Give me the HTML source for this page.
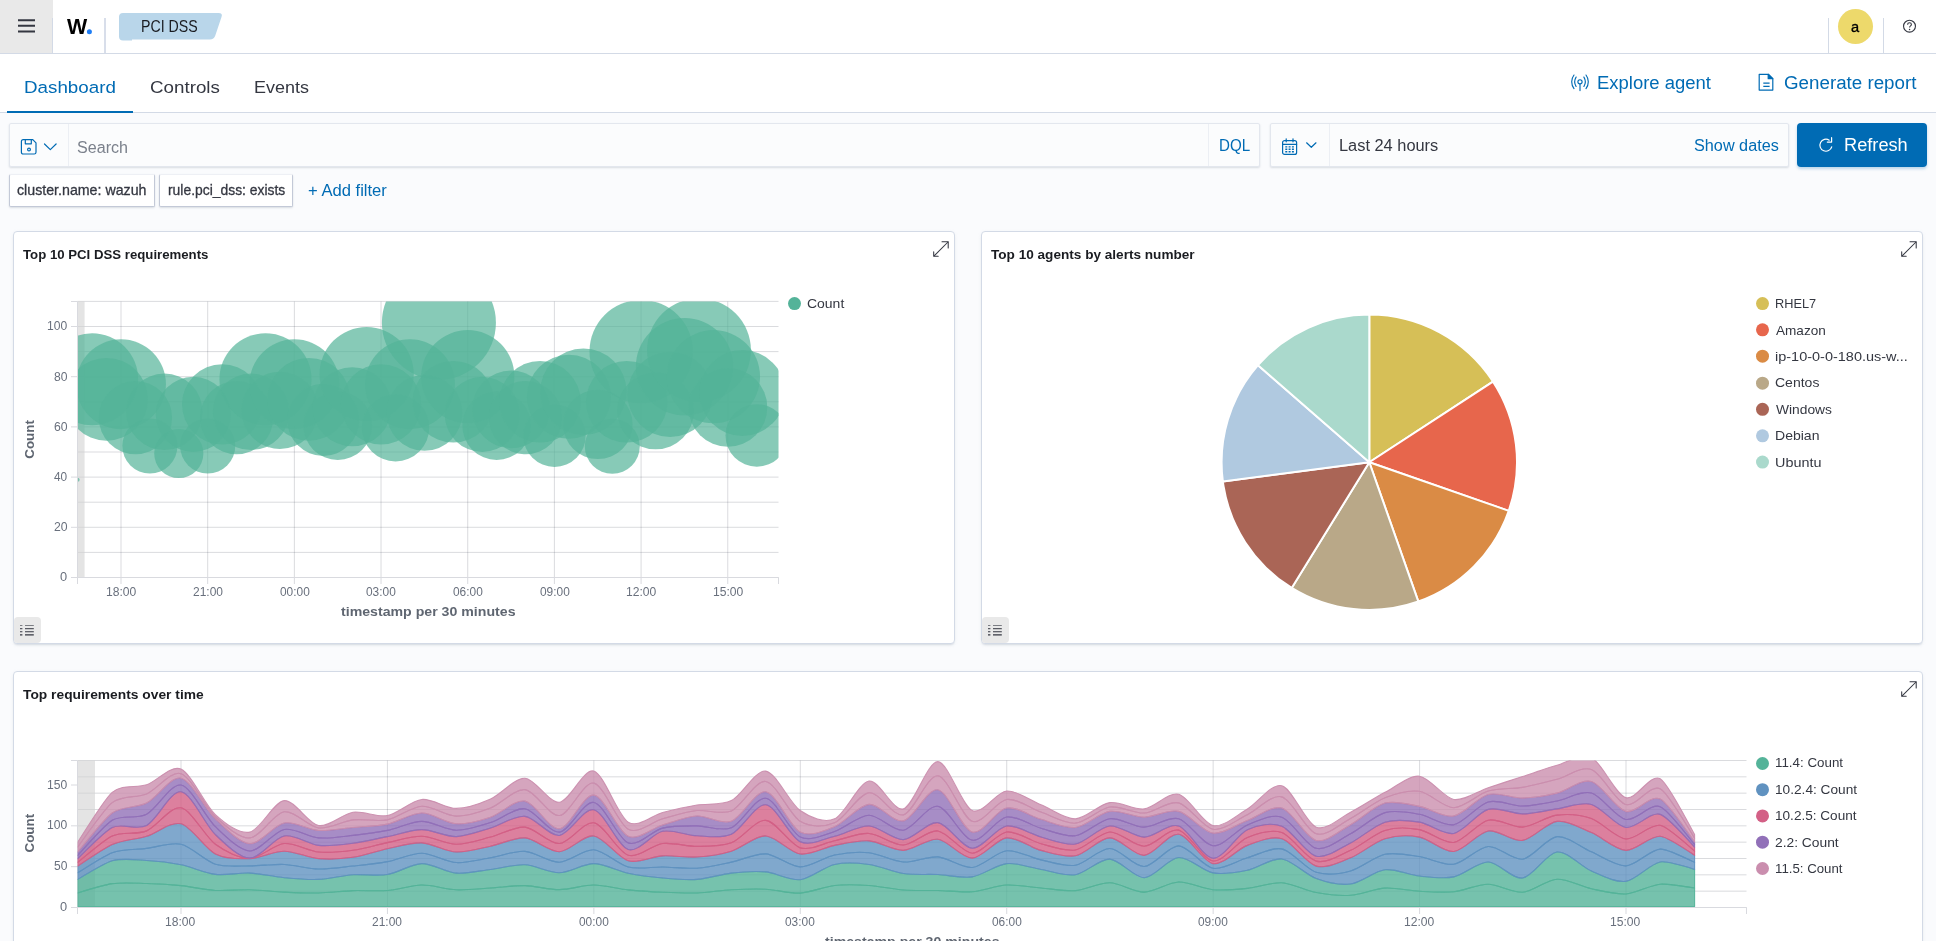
<!DOCTYPE html>
<html lang="en">
<head>
<meta charset="utf-8">
<title>PCI DSS - Wazuh</title>
<style>
*{box-sizing:border-box;margin:0;padding:0}
html,body{width:1936px;height:941px;overflow:hidden}
body{position:relative;background:#fafbfd;font-family:"Liberation Sans",sans-serif;color:#343741}
#app{position:absolute;left:0;top:0;width:1936px;height:941px;overflow:hidden;will-change:transform}
header,nav,main,section,form,ul,li,.grp{position:static;display:block;list-style:none}
.t{position:absolute;white-space:nowrap;line-height:1;display:block;font-style:normal;border:0;background:none;text-decoration:none}
.abs,svg{position:absolute;display:block}
.hdr-bg{position:absolute;left:0;top:0;width:1936px;height:54px;background:#fff;border-bottom:1px solid #d3dae6}
.menu{position:absolute;left:0;top:0;width:53px;height:53px;background:#e9e9e9;border:0}
.vsep{position:absolute;top:18px;width:1px;height:35px;background:#d3dae6}
.avatar{position:absolute;left:1838px;top:9px;width:35px;height:35px;border-radius:50%;background:#edd96b}
.nav-bg{position:absolute;left:0;top:54px;width:1936px;height:59px;background:#fff;border-bottom:1px solid #d3dae6}
.tabsel{position:absolute;left:7px;top:111px;width:126px;height:2px;background:#006bb4}
.field{position:absolute;background:#fbfcfd;border:1px solid #e3e7ee;border-radius:2px;box-shadow:0 1px 2px rgba(152,162,179,.35)}
.fsep{position:absolute;top:0;width:1px;height:100%;background:#eceff4}
.btn{position:absolute;left:1797px;top:123px;width:130px;height:44px;background:#006bb4;border:0;border-radius:4px;box-shadow:0 2px 3px rgba(0,107,180,.25)}
.pill{position:absolute;top:174px;height:33px;background:#fff;border:1px solid #c3c9d7;border-top-color:#eef0f5;border-radius:2px;box-shadow:0 1px 2px rgba(152,162,179,.35)}
.panel{position:absolute;background:#fff;border:1px solid #d3dae6;border-radius:4px;box-shadow:0 2px 2px -1px rgba(152,162,179,.3),0 1px 5px -2px rgba(152,162,179,.3)}
.lgbtn{position:absolute;width:27px;height:26px;background:#e9e9e9;border:0;border-radius:4px 4px 4px 3px}
.menu svg,.lgbtn svg{left:0;top:0}
</style>
</head>
<body>
<div id="app">
<header>
<div class="hdr-bg"></div>
<button class="menu" aria-label="Toggle primary navigation"><svg width="52" height="53" viewBox="0 0 52 53"><path d="M18 20.2h17M18 25.8h17M18 31.4h17" stroke="#343741" stroke-width="2" fill="none"/></svg></button>
<div class="vsep" style="left:52px"></div>
<div class="grp logo">
<span class="t" style='left:66.60px;top:17.00px;font-size:21.5px;color:#000;font-weight:700;font-family:"Liberation Sans", sans-serif;transform:scaleX(0.9951);transform-origin:0 50%;'>W</span>
<svg style="left:86px;top:28px" width="8" height="8" viewBox="0 0 8 8"><circle cx="3.4" cy="3.85" r="2.5" fill="#1f7ef5"/></svg>
</div>
<div class="vsep" style="left:104px;width:2px;background:#d8deea"></div>
<nav class="breadcrumbs" aria-label="breadcrumb">
<svg style="left:118px;top:12px" width="106" height="29" viewBox="118 12 106 29"><path d="M123 13h95.5q4.5 0 3 4l-6.2 18.6q-1.3 4 -5.5 4H132v1h-9q-4 0 -4 -4V17q0 -4 4 -4z" fill="#b9d6ea"/></svg>
<span class="t" style='left:140.76px;top:18.00px;font-size:16.2px;color:#1a1c21;font-weight:400;font-family:"Liberation Sans", sans-serif;transform:scaleX(0.8756);transform-origin:0 50%;'>PCI DSS</span>
</nav>
<div class="vsep" style="left:1828px"></div>
<div class="avatar"></div>
<span class="t" style='left:1851.23px;top:19.00px;font-size:15.4px;color:#000;font-weight:400;font-family:"Liberation Sans", sans-serif;-webkit-text-stroke:0.35px #000;transform:scaleX(0.9500);transform-origin:0 50%;'>a</span>
<div class="vsep" style="left:1883px"></div>
<svg style="left:1901px;top:18px" width="17" height="17" viewBox="0 0 17 17"><circle cx="8.5" cy="8.2" r="5.95" fill="none" stroke="#343741" stroke-width="1.1"/><path d="M6.6 6.7c0-1.1.8-1.9 1.9-1.9s1.9.7 1.9 1.7c0 1.3-1.8 1.4-1.8 2.9" fill="none" stroke="#343741" stroke-width="1.1"/><circle cx="8.55" cy="11.4" r=".75" fill="#343741"/></svg>
</header>
<nav class="tabs">
<div class="nav-bg"></div>
<div class="tabsel"></div>
<a class="t" style='left:23.79px;top:79.00px;font-size:17.4px;color:#006bb4;font-weight:400;font-family:"Liberation Sans", sans-serif;transform:scaleX(1.0793);transform-origin:0 50%;'>Dashboard</a>
<a class="t" style='left:149.84px;top:79.00px;font-size:17.4px;color:#343741;font-weight:400;font-family:"Liberation Sans", sans-serif;transform:scaleX(1.0790);transform-origin:0 50%;'>Controls</a>
<a class="t" style='left:254.45px;top:79.00px;font-size:17.4px;color:#343741;font-weight:400;font-family:"Liberation Sans", sans-serif;transform:scaleX(1.0333);transform-origin:0 50%;'>Events</a>
<svg style="left:1569.7px;top:72px" width="20" height="20" viewBox="0 0 20 20" fill="none" stroke="#006bb4" stroke-width="1.15" stroke-linecap="round"><circle cx="10" cy="9.8" r="2.1"/><path d="M10 12V18.6"/><path d="M6.1 5.1A9.1 9.1 0 0 0 6.1 14.5M13.9 5.1A9.1 9.1 0 0 1 13.9 14.5M4 3A11.2 11.2 0 0 0 4 16.6M16 3A11.2 11.2 0 0 1 16 16.6"/></svg>
<button class="t" style='left:1597.16px;top:74.00px;font-size:18px;color:#006bb4;font-weight:400;font-family:"Liberation Sans", sans-serif;transform:scaleX(1.0258);transform-origin:0 50%;'>Explore agent</button>
<svg style="left:1757px;top:72px" width="20" height="22" viewBox="0 0 20 22" fill="none" stroke="#006bb4" stroke-width="1.2" stroke-linejoin="round"><path d="M2.2 2.3h9l4.6 4.4v11.4H2.2z"/><path d="M11.2 2.3v4.4h4.6z" fill="#006bb4"/><path d="M6.3 11.2h6.3M6.3 14.3h6.3"/></svg>
<button class="t" style='left:1783.66px;top:74.00px;font-size:18px;color:#006bb4;font-weight:400;font-family:"Liberation Sans", sans-serif;transform:scaleX(1.0423);transform-origin:0 50%;'>Generate report</button>
</nav>
<form class="query">
<div class="field" style="left:9px;top:123px;width:1251px;height:44px"><div class="fsep" style="left:58px"></div><div class="fsep" style="left:1198px"></div></div>
<svg style="left:20px;top:138px" width="40" height="18" viewBox="0 0 40 18" fill="none" stroke="#006bb4" stroke-width="1.2" stroke-linejoin="round" stroke-linecap="round"><path d="M3.2 1.6h9.6l3.2 3.2v9.4q0 1.8 -1.8 1.8H3.2q-1.8 0 -1.8 -1.8V3.4q0 -1.8 1.8 -1.8z"/><path d="M5.3 1.8v4h6v-4"/><circle cx="9" cy="11.6" r="1.4"/><path d="M24.5 6l5.8 5.6 5.8 -5.6"/></svg>
<span class="t" style='left:76.89px;top:140.00px;font-size:15.8px;color:#7b818c;font-weight:400;font-family:"Liberation Sans", sans-serif;transform:scaleX(1.0191);transform-origin:0 50%;'>Search</span>
<button class="t" style='left:1219.45px;top:138.00px;font-size:15.8px;color:#006bb4;font-weight:400;font-family:"Liberation Sans", sans-serif;transform:scaleX(0.9578);transform-origin:0 50%;'>DQL</button>
<div class="field" style="left:1270px;top:123px;width:519px;height:44px"><div class="fsep" style="left:58px"></div></div>
<svg style="left:1281px;top:136.6px" width="40" height="20" viewBox="0 0 40 20" fill="none" stroke="#006bb4" stroke-width="1.2" stroke-linejoin="round" stroke-linecap="round"><rect x="1.6" y="3.6" width="14" height="13.8" rx="2"/><path d="M1.6 7.4h14M5.2 1.8v3M12 1.8v3"/><path d="M4.3 9.9h8.6M4.3 12.3h8.6M4.3 14.7h8.6" stroke-width="1.4" stroke-dasharray="2 1.3" stroke-linecap="butt"/><path d="M25.6 5.8l4.7 4.5 4.7 -4.5"/></svg>
<span class="t" style='left:1338.56px;top:138.00px;font-size:15.8px;color:#343741;font-weight:400;font-family:"Liberation Sans", sans-serif;transform:scaleX(1.0368);transform-origin:0 50%;'>Last 24 hours</span>
<button class="t" style='left:1694.08px;top:138.00px;font-size:15.8px;color:#006bb4;font-weight:400;font-family:"Liberation Sans", sans-serif;transform:scaleX(1.0275);transform-origin:0 50%;'>Show dates</button>
<button class="btn" aria-label="Refresh"></button>
<svg style="left:1817px;top:136px" width="18" height="18" viewBox="0 0 18 18" fill="none" stroke="#fff" stroke-width="1.2" stroke-linecap="round" stroke-linejoin="round"><path d="M14.7 10.8A6 6 0 1 1 12.2 4.2"/><path d="M14.6 1.7v4.4h-4.3"/></svg>
<span class="t" style='left:1843.98px;top:136.00px;font-size:18px;color:#fff;font-weight:400;font-family:"Liberation Sans", sans-serif;transform:scaleX(1.0113);transform-origin:0 50%;'>Refresh</span>
</form>
<ul class="filters">
<li><div class="pill" style="left:9px;width:146px"></div>
<span class="t" style='left:17.32px;top:183.00px;font-size:14.8px;color:#343741;font-weight:400;font-family:"Liberation Sans", sans-serif;-webkit-text-stroke:0.3px #343741;transform:scaleX(0.9597);transform-origin:0 50%;'>cluster.name: wazuh</span>
</li><li><div class="pill" style="left:159px;width:134px"></div>
<span class="t" style='left:167.76px;top:183.00px;font-size:14.8px;color:#343741;font-weight:400;font-family:"Liberation Sans", sans-serif;-webkit-text-stroke:0.3px #343741;transform:scaleX(0.9383);transform-origin:0 50%;'>rule.pci_dss: exists</span>
</li><li>
<button class="t" style='left:308.46px;top:183.00px;font-size:15.8px;color:#006bb4;font-weight:400;font-family:"Liberation Sans", sans-serif;transform:scaleX(1.0506);transform-origin:0 50%;'>+ Add filter</button>
</li></ul>
<main>
<section class="p1">
<div class="panel" style="left:13px;top:231px;width:942px;height:413px"></div>
<h2 class="t" style='left:23.30px;top:248.00px;font-size:13.7px;color:#1a1c21;font-weight:700;font-family:"Liberation Sans", sans-serif;transform:scaleX(0.9649);transform-origin:0 50%;'>Top 10 PCI DSS requirements</h2>
<svg style="left:932px;top:240px" width="18" height="18" viewBox="0 0 18 18" fill="none" stroke="#343741" stroke-width="1.05" stroke-linecap="round" stroke-linejoin="round"><path d="M2.4 15.6L16 2"/><path d="M10 1.7H16.2V7.9"/><path d="M1.7 11.7V16.3H6.2"/></svg>
<svg style="left:14px;top:232px" width="940" height="411" viewBox="14 232 940 411"><defs><clipPath id="c1"><rect x="77.5" y="301.5" width="701" height="276"/></clipPath></defs><g stroke="#1a2030" stroke-opacity=".16" stroke-width="1" fill="none"><path d="M77.5 577.5H778.5M77.5 552.4H778.5M77.5 527.3H778.5M77.5 502.2H778.5M77.5 477.1H778.5M77.5 452H778.5M77.5 426.9H778.5M77.5 401.8H778.5M77.5 376.7H778.5M77.5 351.6H778.5M77.5 326.5H778.5M77.5 301.4H778.5"/><path d="M121 301.5V577.5M207.68 301.5V577.5M294.36 301.5V577.5M381.04 301.5V577.5M467.72 301.5V577.5M554.4 301.5V577.5M641.08 301.5V577.5M727.76 301.5V577.5"/></g><rect x="77.5" y="301.5" width="7.1" height="276.0" fill="#d2d2d2" fill-opacity=".6"/><g clip-path="url(#c1)" fill="#54b399" fill-opacity=".7"><circle cx="77.65" cy="479.86" r="2"/><circle cx="92.1" cy="379.21" r="46.04"/><circle cx="106.55" cy="399.29" r="41.41"/><circle cx="121" cy="384.23" r="44.93"/><circle cx="135.45" cy="417.61" r="36.65"/><circle cx="149.9" cy="445.98" r="27.58"/><circle cx="164.35" cy="411.84" r="38.22"/><circle cx="178.8" cy="453.51" r="24.57"/><circle cx="193.25" cy="414.35" r="37.54"/><circle cx="207.7" cy="445.98" r="27.58"/><circle cx="222.15" cy="404.31" r="40.16"/><circle cx="236.6" cy="417.61" r="36.65"/><circle cx="251.05" cy="411.84" r="38.22"/><circle cx="265.5" cy="379.21" r="46.04"/><circle cx="279.95" cy="410.33" r="38.61"/><circle cx="294.4" cy="384.23" r="44.93"/><circle cx="308.85" cy="399.29" r="41.41"/><circle cx="323.3" cy="419.87" r="36.01"/><circle cx="337.75" cy="425.64" r="34.34"/><circle cx="352.2" cy="406.82" r="39.53"/><circle cx="366.65" cy="374.19" r="47.13"/><circle cx="381.1" cy="404.31" r="40.16"/><circle cx="395.55" cy="427.65" r="33.74"/><circle cx="410" cy="384.23" r="44.93"/><circle cx="424.45" cy="412.84" r="37.95"/><circle cx="438.9" cy="322.74" r="57.02"/><circle cx="453.35" cy="401.8" r="40.79"/><circle cx="467.8" cy="376.7" r="46.59"/><circle cx="482.25" cy="414.35" r="37.54"/><circle cx="496.7" cy="425.64" r="34.34"/><circle cx="511.15" cy="409.33" r="38.88"/><circle cx="525.6" cy="417.61" r="36.65"/><circle cx="540.05" cy="401.8" r="40.79"/><circle cx="554.5" cy="435.69" r="31.2"/><circle cx="568.95" cy="396.78" r="42.02"/><circle cx="583.4" cy="391.76" r="43.21"/><circle cx="597.85" cy="424.39" r="34.71"/><circle cx="612.3" cy="446.23" r="27.49"/><circle cx="626.75" cy="401.8" r="40.79"/><circle cx="641.2" cy="351.6" r="51.71"/><circle cx="655.65" cy="410.84" r="38.48"/><circle cx="670.1" cy="394.27" r="42.62"/><circle cx="684.55" cy="366.66" r="48.7"/><circle cx="699" cy="350.35" r="51.95"/><circle cx="713.45" cy="376.7" r="46.59"/><circle cx="727.9" cy="407.32" r="39.4"/><circle cx="742.35" cy="393.01" r="42.91"/><circle cx="756.8" cy="435.43" r="31.28"/></g><path d="M77.5 301.5V577.5M77.5 577.5H778.5M71 577.5H77.5M71 527.3H77.5M71 477.1H77.5M71 426.9H77.5M71 376.7H77.5M71 326.5H77.5M71 301.5H77.5M121 577.5V584M207.68 577.5V584M294.36 577.5V584M381.04 577.5V584M467.72 577.5V584M554.4 577.5V584M641.08 577.5V584M727.76 577.5V584M77.5 577.5V584M778.5 577.5V584" stroke="#d9dadf" stroke-width="1" fill="none"/><text x="33.8" y="439.4" transform="rotate(-90 33.8 439.4)" text-anchor="middle" font-family="Liberation Sans, sans-serif" font-size="13.6" font-weight="700" fill="#5f6671" textLength="38.6" lengthAdjust="spacingAndGlyphs">Count</text></svg>
<span class="t" style='left:60.07px;top:571.00px;font-size:12px;color:#69707d;font-weight:400;font-family:"Liberation Sans", sans-serif;transform:scaleX(1.0678);transform-origin:0 50%;'>0</span>
<span class="t" style='left:53.59px;top:521.00px;font-size:12px;color:#69707d;font-weight:400;font-family:"Liberation Sans", sans-serif;transform:scaleX(1.0183);transform-origin:0 50%;'>20</span>
<span class="t" style='left:54.00px;top:471.00px;font-size:12px;color:#69707d;font-weight:400;font-family:"Liberation Sans", sans-serif;transform:scaleX(0.9864);transform-origin:0 50%;'>40</span>
<span class="t" style='left:53.59px;top:421.00px;font-size:12px;color:#69707d;font-weight:400;font-family:"Liberation Sans", sans-serif;transform:scaleX(1.0183);transform-origin:0 50%;'>60</span>
<span class="t" style='left:53.69px;top:371.00px;font-size:12px;color:#69707d;font-weight:400;font-family:"Liberation Sans", sans-serif;transform:scaleX(1.0101);transform-origin:0 50%;'>80</span>
<span class="t" style='left:46.99px;top:320.00px;font-size:12px;color:#69707d;font-weight:400;font-family:"Liberation Sans", sans-serif;transform:scaleX(1.0081);transform-origin:0 50%;'>100</span>
<span class="t" style='left:105.89px;top:586.00px;font-size:12px;color:#69707d;font-weight:400;font-family:"Liberation Sans", sans-serif;transform:scaleX(1.0085);transform-origin:0 50%;'>18:00</span>
<span class="t" style='left:192.88px;top:586.00px;font-size:12px;color:#69707d;font-weight:400;font-family:"Liberation Sans", sans-serif;transform:scaleX(0.9981);transform-origin:0 50%;'>21:00</span>
<span class="t" style='left:279.76px;top:586.00px;font-size:12px;color:#69707d;font-weight:400;font-family:"Liberation Sans", sans-serif;transform:scaleX(0.9913);transform-origin:0 50%;'>00:00</span>
<span class="t" style='left:366.44px;top:586.00px;font-size:12px;color:#69707d;font-weight:400;font-family:"Liberation Sans", sans-serif;transform:scaleX(0.9913);transform-origin:0 50%;'>03:00</span>
<span class="t" style='left:453.12px;top:586.00px;font-size:12px;color:#69707d;font-weight:400;font-family:"Liberation Sans", sans-serif;transform:scaleX(0.9913);transform-origin:0 50%;'>06:00</span>
<span class="t" style='left:539.80px;top:586.00px;font-size:12px;color:#69707d;font-weight:400;font-family:"Liberation Sans", sans-serif;transform:scaleX(0.9913);transform-origin:0 50%;'>09:00</span>
<span class="t" style='left:625.97px;top:586.00px;font-size:12px;color:#69707d;font-weight:400;font-family:"Liberation Sans", sans-serif;transform:scaleX(1.0085);transform-origin:0 50%;'>12:00</span>
<span class="t" style='left:712.65px;top:586.00px;font-size:12px;color:#69707d;font-weight:400;font-family:"Liberation Sans", sans-serif;transform:scaleX(1.0085);transform-origin:0 50%;'>15:00</span>
<span class="t" style='left:340.90px;top:605.00px;font-size:13.6px;color:#5f6671;font-weight:700;font-family:"Liberation Sans", sans-serif;transform:scaleX(1.0405);transform-origin:0 50%;'>timestamp per 30 minutes</span>
<button class="lgbtn" style="left:14px;top:617px" aria-label="Toggle legend"><svg width="27" height="27" viewBox="0 0 27 27" fill="none" stroke="#343741" stroke-width="1.15"><path d="M11 8.5H19.8M6 8.5H8.4" stroke-opacity=".6"/><path d="M11 11.6H19.8M6 11.6H8.4" stroke-opacity=".8"/><path d="M11 14.7H19.8M6 14.7H8.4M11 17.8H19.8M6 17.8H8.4"/></svg></button>
<svg style="left:786.5px;top:295px" width="16" height="17" viewBox="786.5 295 16 17"><circle cx="794" cy="303.6" r="6.5" fill="#54b399"/></svg><ul class="legend"><li><span class="t" style='left:807.28px;top:297.00px;font-size:13.5px;color:#343741;font-weight:400;font-family:"Liberation Sans", sans-serif;transform:scaleX(1.0347);transform-origin:0 50%;'>Count</span></li></ul>
</section>
<section class="p2">
<div class="panel" style="left:981px;top:231px;width:942px;height:413px"></div>
<h2 class="t" style='left:991.30px;top:248.00px;font-size:13.7px;color:#1a1c21;font-weight:700;font-family:"Liberation Sans", sans-serif;transform:scaleX(0.9928);transform-origin:0 50%;'>Top 10 agents by alerts number</h2>
<svg style="left:1900px;top:240px" width="18" height="18" viewBox="0 0 18 18" fill="none" stroke="#343741" stroke-width="1.05" stroke-linecap="round" stroke-linejoin="round"><path d="M2.4 15.6L16 2"/><path d="M10 1.7H16.2V7.9"/><path d="M1.7 11.7V16.3H6.2"/></svg>
<svg style="left:982px;top:232px" width="940" height="411" viewBox="982 232 940 411"><path d="M1369.3 462.25L1369.3 314.55A147.7 147.7 0 0 1 1493.03 381.59Z" fill="#d6bf57" stroke="#fff" stroke-width="2" stroke-linejoin="round"/><path d="M1369.3 462.25L1493.03 381.59A147.7 147.7 0 0 1 1508.78 510.82Z" fill="#e7664c" stroke="#fff" stroke-width="2" stroke-linejoin="round"/><path d="M1369.3 462.25L1508.78 510.82A147.7 147.7 0 0 1 1418.36 601.56Z" fill="#da8b45" stroke="#fff" stroke-width="2" stroke-linejoin="round"/><path d="M1369.3 462.25L1418.36 601.56A147.7 147.7 0 0 1 1291.69 587.91Z" fill="#b9a888" stroke="#fff" stroke-width="2" stroke-linejoin="round"/><path d="M1369.3 462.25L1291.69 587.91A147.7 147.7 0 0 1 1222.86 481.53Z" fill="#aa6556" stroke="#fff" stroke-width="2" stroke-linejoin="round"/><path d="M1369.3 462.25L1222.86 481.53A147.7 147.7 0 0 1 1258 365.16Z" fill="#b0c9e0" stroke="#fff" stroke-width="2" stroke-linejoin="round"/><path d="M1369.3 462.25L1258 365.16A147.7 147.7 0 0 1 1369.3 314.55Z" fill="#aad9cc" stroke="#fff" stroke-width="2" stroke-linejoin="round"/></svg>
<button class="lgbtn" style="left:982px;top:617px" aria-label="Toggle legend"><svg width="27" height="27" viewBox="0 0 27 27" fill="none" stroke="#343741" stroke-width="1.15"><path d="M11 8.5H19.8M6 8.5H8.4" stroke-opacity=".6"/><path d="M11 11.6H19.8M6 11.6H8.4" stroke-opacity=".8"/><path d="M11 14.7H19.8M6 14.7H8.4M11 17.8H19.8M6 17.8H8.4"/></svg></button>
<svg style="left:1754.5px;top:295px" width="16" height="176" viewBox="1754.5 295 16 176"><circle cx="1762" cy="303.6" r="6.5" fill="#d6bf57"/><circle cx="1762" cy="329.8" r="6.5" fill="#e7664c"/><circle cx="1762" cy="356.2" r="6.5" fill="#da8b45"/><circle cx="1762" cy="383.2" r="6.5" fill="#b9a888"/><circle cx="1762" cy="409.3" r="6.5" fill="#aa6556"/><circle cx="1762" cy="435.8" r="6.5" fill="#b0c9e0"/><circle cx="1762" cy="462.1" r="6.5" fill="#aad9cc"/></svg><ul class="legend"><li><span class="t" style='left:1774.86px;top:297.00px;font-size:13.5px;color:#343741;font-weight:400;font-family:"Liberation Sans", sans-serif;transform:scaleX(0.9447);transform-origin:0 50%;'>RHEL7</span></li><li><span class="t" style='left:1775.90px;top:324.00px;font-size:13.5px;color:#343741;font-weight:400;font-family:"Liberation Sans", sans-serif;transform:scaleX(1.0058);transform-origin:0 50%;'>Amazon</span></li><li><span class="t" style='left:1774.93px;top:350.00px;font-size:13.5px;color:#343741;font-weight:400;font-family:"Liberation Sans", sans-serif;transform:scaleX(1.0726);transform-origin:0 50%;'>ip-10-0-0-180.us-w...</span></li><li><span class="t" style='left:1775.28px;top:376.00px;font-size:13.5px;color:#343741;font-weight:400;font-family:"Liberation Sans", sans-serif;transform:scaleX(1.0378);transform-origin:0 50%;'>Centos</span></li><li><span class="t" style='left:1775.90px;top:403.00px;font-size:13.5px;color:#343741;font-weight:400;font-family:"Liberation Sans", sans-serif;transform:scaleX(1.0218);transform-origin:0 50%;'>Windows</span></li><li><span class="t" style='left:1774.76px;top:429.00px;font-size:13.5px;color:#343741;font-weight:400;font-family:"Liberation Sans", sans-serif;transform:scaleX(1.0398);transform-origin:0 50%;'>Debian</span></li><li><span class="t" style='left:1774.83px;top:456.00px;font-size:13.5px;color:#343741;font-weight:400;font-family:"Liberation Sans", sans-serif;transform:scaleX(1.0665);transform-origin:0 50%;'>Ubuntu</span></li></ul>
</section>
<section class="p3">
<div class="panel" style="left:13px;top:671px;width:1910px;height:300px"></div>
<h2 class="t" style='left:23.30px;top:688.00px;font-size:13.7px;color:#1a1c21;font-weight:700;font-family:"Liberation Sans", sans-serif;transform:scaleX(1.0079);transform-origin:0 50%;'>Top requirements over time</h2>
<svg style="left:1900px;top:680px" width="18" height="18" viewBox="0 0 18 18" fill="none" stroke="#343741" stroke-width="1.05" stroke-linecap="round" stroke-linejoin="round"><path d="M2.4 15.6L16 2"/><path d="M10 1.7H16.2V7.9"/><path d="M1.7 11.7V16.3H6.2"/></svg>
<svg style="left:14px;top:672px" width="1908" height="269" viewBox="14 672 1908 269"><defs><clipPath id="c3"><rect x="77.5" y="760.5" width="1669.0" height="146.5"/></clipPath></defs><g stroke="#1a2030" stroke-opacity=".16" stroke-width="1" fill="none"><path d="M77.5 907.5H1746.5M77.5 891.17H1746.5M77.5 874.83H1746.5M77.5 858.5H1746.5M77.5 842.17H1746.5M77.5 825.83H1746.5M77.5 809.5H1746.5M77.5 793.17H1746.5M77.5 776.83H1746.5M77.5 760.5H1746.5"/><path d="M181 760.5V907.5M387.43 760.5V907.5M593.86 760.5V907.5M800.29 760.5V907.5M1006.72 760.5V907.5M1213.15 760.5V907.5M1419.58 760.5V907.5M1626.01 760.5V907.5"/></g><rect x="77.5" y="760.5" width="17.5" height="147.0" fill="#d2d2d2" fill-opacity=".6"/><path d="M77.5 760.5V907.5M77.5 907.5H1746.5M71 907.5H77.5M71 866.67H77.5M71 825.83H77.5M71 785H77.5M71 760.5H77.5M181 907.5V914M387.43 907.5V914M593.86 907.5V914M800.29 907.5V914M1006.72 907.5V914M1213.15 907.5V914M1419.58 907.5V914M1626.01 907.5V914M77.5 907.5V914M1746.5 907.5V914" stroke="#d9dadf" stroke-width="1" fill="none"/><g clip-path="url(#c3)" fill-opacity=".8" stroke-opacity=".95" stroke-width="1.1" stroke-linejoin="round"><path d="M77.8,892.94Q105.32,884.6,112.2,883.65C122.52,882.23,136.28,883.19,146.6,883.49S170.68,884.6,181,885.64S205.08,889.83,215.4,890.45S239.48,889.54,249.8,889.79S273.88,891.64,284.2,892.11S308.28,893.16,318.6,892.94S342.68,890.98,353,890.62S377.08,891.37,387.4,890.53S411.48,885.17,421.8,885.06S445.88,889.35,456.2,889.79S480.28,888.59,490.6,887.96S514.68,885.39,525,885.64S549.08,889.71,559.4,889.62S583.48,885.02,593.8,885.06S617.88,888.79,628.2,889.87S652.28,891.82,662.6,892.28S686.68,893.31,697,892.94S721.08,890.35,731.4,889.79S755.48,888.71,765.8,889.21S789.88,893.66,800.2,893.1S824.28,886.62,834.6,885.48S858.68,884.79,869,885.48S893.08,889.28,903.4,890.04S927.48,890.29,937.8,890.53S961.88,892.52,972.2,891.7S996.28,885.62,1006.6,885.06S1030.68,887.13,1041,887.96S1065.08,891.39,1075.4,890.62S1099.48,882.6,1109.8,882.82S1133.88,892.23,1144.2,892.11S1168.28,882.35,1178.6,881.99S1202.68,888.75,1213,889.71S1237.08,889.42,1247.4,888.38S1271.48,882.12,1281.8,882.74S1305.88,890.65,1316.2,892.52S1340.28,895.92,1350.6,895.26S1374.68,888.73,1385,888.13S1409.08,890.75,1419.4,891.28S1443.48,892.75,1453.8,891.7S1477.88,884.15,1488.2,884.23S1512.28,893.02,1522.6,892.28S1546.68,879.78,1557,879.26S1581.08,886.59,1591.4,888.79S1615.48,894.62,1625.8,893.93S1649.88,885.13,1660.2,884.23Q1667.08,883.64,1694.6,887.96L1694.6,906.5Q1667.08,906.5,1660.2,906.5C1649.88,906.5,1636.12,906.5,1625.8,906.5S1601.72,906.5,1591.4,906.5S1567.32,906.5,1557,906.5S1532.92,906.5,1522.6,906.5S1498.52,906.5,1488.2,906.5S1464.12,906.5,1453.8,906.5S1429.72,906.5,1419.4,906.5S1395.32,906.5,1385,906.5S1360.92,906.5,1350.6,906.5S1326.52,906.5,1316.2,906.5S1292.12,906.5,1281.8,906.5S1257.72,906.5,1247.4,906.5S1223.32,906.5,1213,906.5S1188.92,906.5,1178.6,906.5S1154.52,906.5,1144.2,906.5S1120.12,906.5,1109.8,906.5S1085.72,906.5,1075.4,906.5S1051.32,906.5,1041,906.5S1016.92,906.5,1006.6,906.5S982.52,906.5,972.2,906.5S948.12,906.5,937.8,906.5S913.72,906.5,903.4,906.5S879.32,906.5,869,906.5S844.92,906.5,834.6,906.5S810.52,906.5,800.2,906.5S776.12,906.5,765.8,906.5S741.72,906.5,731.4,906.5S707.32,906.5,697,906.5S672.92,906.5,662.6,906.5S638.52,906.5,628.2,906.5S604.12,906.5,593.8,906.5S569.72,906.5,559.4,906.5S535.32,906.5,525,906.5S500.92,906.5,490.6,906.5S466.52,906.5,456.2,906.5S432.12,906.5,421.8,906.5S397.72,906.5,387.4,906.5S363.32,906.5,353,906.5S328.92,906.5,318.6,906.5S294.52,906.5,284.2,906.5S260.12,906.5,249.8,906.5S225.72,906.5,215.4,906.5S191.32,906.5,181,906.5S156.92,906.5,146.6,906.5S122.52,906.5,112.2,906.5Q105.32,906.5,77.8,906.5Z" fill="#54b399" stroke="#54b399"/><path d="M77.8,879.38Q105.32,862.69,112.2,860.8C122.52,857.97,136.28,859.88,146.6,860.47S170.68,862.69,181,864.78S205.08,873.16,215.4,874.4S239.48,872.58,249.8,873.08S273.88,876.77,284.2,877.72S308.28,879.83,318.6,879.38S342.68,875.46,353,874.73S377.08,876.24,387.4,874.57S411.48,863.85,421.8,863.62S445.88,872.21,456.2,873.08S480.28,870.67,490.6,869.43S514.68,864.29,525,864.78S549.08,872.92,559.4,872.74S583.48,863.55,593.8,863.62S617.88,871.08,628.2,873.24S652.28,877.13,662.6,878.05S686.68,880.12,697,879.38S721.08,874.2,731.4,873.08S755.48,870.92,765.8,871.92S789.88,880.83,800.2,879.71S824.28,866.74,834.6,864.45S858.68,863.08,869,864.45S893.08,872.06,903.4,873.57S927.48,874.07,937.8,874.57S961.88,878.53,972.2,876.89S996.28,864.74,1006.6,863.62S1030.68,867.76,1041,869.43S1065.08,876.28,1075.4,874.73S1099.48,858.7,1109.8,859.15S1133.88,877.97,1144.2,877.72S1168.28,858.21,1178.6,857.49S1202.68,871,1213,872.91S1237.08,872.35,1247.4,870.26S1271.48,857.74,1281.8,858.98S1305.88,874.79,1316.2,878.55S1340.28,885.34,1350.6,884.02S1374.68,870.95,1385,869.76S1409.08,874.99,1419.4,876.06S1443.48,879,1453.8,876.89S1477.88,861.79,1488.2,861.97S1512.28,879.54,1522.6,878.05S1546.68,853.06,1557,852.01S1581.08,866.68,1591.4,871.09S1615.48,882.74,1625.8,881.37S1649.88,863.76,1660.2,861.97Q1667.08,860.77,1694.6,869.43L1694.6,887.96Q1667.08,883.64,1660.2,884.23C1649.88,885.13,1636.12,893.25,1625.8,893.93S1601.72,890.99,1591.4,888.79S1567.32,878.74,1557,879.26S1532.92,891.53,1522.6,892.28S1498.52,884.32,1488.2,884.23S1464.12,890.64,1453.8,891.7S1429.72,891.82,1419.4,891.28S1395.32,887.53,1385,888.13S1360.92,894.6,1350.6,895.26S1326.52,894.4,1316.2,892.52S1292.12,883.36,1281.8,882.74S1257.72,887.33,1247.4,888.38S1223.32,890.66,1213,889.71S1188.92,881.63,1178.6,881.99S1154.52,891.99,1144.2,892.11S1120.12,883.05,1109.8,882.82S1085.72,889.85,1075.4,890.62S1051.32,888.8,1041,887.96S1016.92,884.5,1006.6,885.06S982.52,890.87,972.2,891.7S948.12,890.78,937.8,890.53S913.72,890.8,903.4,890.04S879.32,886.16,869,885.48S844.92,884.33,834.6,885.48S810.52,892.55,800.2,893.1S776.12,889.71,765.8,889.21S741.72,889.23,731.4,889.79S707.32,892.57,697,892.94S672.92,892.74,662.6,892.28S638.52,890.95,628.2,889.87S604.12,885.1,593.8,885.06S569.72,889.54,559.4,889.62S535.32,885.89,525,885.64S500.92,887.34,490.6,887.96S466.52,890.22,456.2,889.79S432.12,884.95,421.8,885.06S397.72,889.7,387.4,890.53S363.32,890.26,353,890.62S328.92,892.72,318.6,892.94S294.52,892.58,284.2,892.11S260.12,890.04,249.8,889.79S225.72,891.07,215.4,890.45S191.32,886.69,181,885.64S156.92,883.78,146.6,883.49S122.52,882.23,112.2,883.65Q105.32,884.6,77.8,892.94Z" fill="#54b399" stroke="#54b399"/><path d="M77.8,872.74Q105.32,855.12,112.2,852.68C122.52,849.02,136.28,849.62,146.6,848.37S170.68,841.93,181,844.3S205.08,860.97,215.4,864.2S239.48,865.83,249.8,865.86S273.88,863.98,284.2,864.45S308.28,868.78,318.6,869.01S342.68,867.14,353,866.03S377.08,863.55,387.4,861.63S411.48,853.12,421.8,853.26S445.88,861.86,456.2,862.55S480.28,859.5,490.6,857.82S514.68,850.69,525,851.35S549.08,862.45,559.4,862.21S583.48,849.05,593.8,849.78S617.88,864.45,628.2,867.02S652.28,866.77,662.6,866.94S686.68,868.91,697,868.18S721.08,864.27,731.4,862.13S755.48,853.21,765.8,853.92S789.88,866.71,800.2,866.86S824.28,857.04,834.6,854.92S858.68,851.62,869,852.68S893.08,861.33,903.4,861.97S927.48,856.07,937.8,856.91S961.88,868.44,972.2,867.52S996.28,851.92,1006.6,850.77S1030.68,857.72,1041,859.89S1065.08,866.99,1075.4,865.28S1099.48,848.35,1109.8,848.53S1133.88,866.92,1144.2,866.53S1168.28,845.62,1178.6,845.88S1202.68,866.48,1213,868.27S1237.08,860.73,1247.4,857.82S1271.48,846.69,1281.8,848.86S1305.88,869.02,1316.2,872.33S1340.28,873.63,1350.6,870.92S1374.68,856.41,1385,854.25S1409.08,855.08,1419.4,856.58S1443.48,865.72,1453.8,864.2S1477.88,847.21,1488.2,846.46S1512.28,860.7,1522.6,859.23S1546.68,837.78,1557,836.67S1581.08,847.47,1591.4,851.85S1615.48,866.27,1625.8,865.86S1649.88,849.64,1660.2,849.11Q1667.08,848.76,1694.6,862.38L1694.6,869.43Q1667.08,860.77,1660.2,861.97C1649.88,863.76,1636.12,880,1625.8,881.37S1601.72,875.49,1591.4,871.09S1567.32,850.97,1557,852.01S1532.92,876.56,1522.6,878.05S1498.52,862.14,1488.2,861.97S1464.12,874.78,1453.8,876.89S1429.72,877.13,1419.4,876.06S1395.32,868.57,1385,869.76S1360.92,882.7,1350.6,884.02S1326.52,882.31,1316.2,878.55S1292.12,860.22,1281.8,858.98S1257.72,868.17,1247.4,870.26S1223.32,874.83,1213,872.91S1188.92,856.77,1178.6,857.49S1154.52,877.47,1144.2,877.72S1120.12,859.59,1109.8,859.15S1085.72,873.19,1075.4,874.73S1051.32,871.09,1041,869.43S1016.92,862.5,1006.6,863.62S982.52,875.25,972.2,876.89S948.12,875.07,937.8,874.57S913.72,875.09,903.4,873.57S879.32,865.82,869,864.45S844.92,862.16,834.6,864.45S810.52,878.59,800.2,879.71S776.12,872.91,765.8,871.92S741.72,871.96,731.4,873.08S707.32,878.63,697,879.38S672.92,878.97,662.6,878.05S638.52,875.41,628.2,873.24S604.12,863.7,593.8,863.62S569.72,872.57,559.4,872.74S535.32,865.28,525,864.78S500.92,868.18,490.6,869.43S466.52,873.95,456.2,873.08S432.12,863.4,421.8,863.62S397.72,872.9,387.4,874.57S363.32,874.01,353,874.73S328.92,878.93,318.6,879.38S294.52,878.67,284.2,877.72S260.12,873.57,249.8,873.08S225.72,875.65,215.4,874.4S191.32,866.87,181,864.78S156.92,861.07,146.6,860.47S122.52,857.97,112.2,860.8Q105.32,862.69,77.8,879.38Z" fill="#6092c0" stroke="#6092c0"/><path d="M77.8,866.11Q105.32,847.54,112.2,844.55C122.52,840.07,136.28,839.37,146.6,836.26S170.68,821.16,181,823.82S205.08,848.78,215.4,854S239.48,859.07,249.8,858.65S273.88,851.19,284.2,851.19S308.28,857.73,318.6,858.65S342.68,858.81,353,857.32S377.08,850.86,387.4,848.7S411.48,842.4,421.8,842.89S445.88,851.52,456.2,852.01S480.28,848.33,490.6,846.21S514.68,837.1,525,837.92S549.08,851.98,559.4,851.68S583.48,834.56,593.8,835.93S617.88,857.82,628.2,860.8S652.28,856.4,662.6,855.83S686.68,857.69,697,856.99S721.08,854.34,731.4,851.19S755.48,835.51,765.8,835.93S789.88,852.59,800.2,854S824.28,847.35,834.6,845.38S858.68,840.16,869,840.9S893.08,850.61,903.4,850.36S927.48,838.08,937.8,839.25S961.88,858.35,972.2,858.15S996.28,839.09,1006.6,837.92S1030.68,847.67,1041,850.36S1065.08,857.69,1075.4,855.83S1099.48,837.99,1109.8,837.92S1133.88,855.88,1144.2,855.33S1168.28,833.03,1178.6,834.27S1202.68,861.96,1213,863.62S1237.08,849.11,1247.4,845.38S1271.48,835.64,1281.8,838.75S1305.88,863.25,1316.2,866.11S1340.28,861.92,1350.6,857.82S1374.68,841.86,1385,838.75S1409.08,835.17,1419.4,837.09S1443.48,852.44,1453.8,851.52S1477.88,832.62,1488.2,830.95S1512.28,841.85,1522.6,840.41S1546.68,822.5,1557,821.33S1581.08,828.26,1591.4,832.61S1615.48,849.81,1625.8,850.36S1649.88,835.51,1660.2,836.26Q1667.08,836.76,1694.6,855.33L1694.6,862.38Q1667.08,848.76,1660.2,849.11C1649.88,849.64,1636.12,865.45,1625.8,865.86S1601.72,856.23,1591.4,851.85S1567.32,835.57,1557,836.67S1532.92,857.76,1522.6,859.23S1498.52,845.71,1488.2,846.46S1464.12,862.69,1453.8,864.2S1429.72,858.07,1419.4,856.58S1395.32,852.1,1385,854.25S1360.92,868.21,1350.6,870.92S1326.52,875.64,1316.2,872.33S1292.12,851.04,1281.8,848.86S1257.72,854.91,1247.4,857.82S1223.32,870.06,1213,868.27S1188.92,846.14,1178.6,845.88S1154.52,866.13,1144.2,866.53S1120.12,848.72,1109.8,848.53S1085.72,863.58,1075.4,865.28S1051.32,862.07,1041,859.89S1016.92,849.63,1006.6,850.77S982.52,866.6,972.2,867.52S948.12,857.74,937.8,856.91S913.72,862.6,903.4,861.97S879.32,853.74,869,852.68S844.92,852.79,834.6,854.92S810.52,867.01,800.2,866.86S776.12,854.63,765.8,853.92S741.72,859.99,731.4,862.13S707.32,867.46,697,868.18S672.92,867.11,662.6,866.94S638.52,869.6,628.2,867.02S604.12,850.5,593.8,849.78S569.72,861.98,559.4,862.21S535.32,852.01,525,851.35S500.92,856.14,490.6,857.82S466.52,863.23,456.2,862.55S432.12,853.4,421.8,853.26S397.72,859.72,387.4,861.63S363.32,864.92,353,866.03S328.92,869.25,318.6,869.01S294.52,864.93,284.2,864.45S260.12,865.9,249.8,865.86S225.72,867.44,215.4,864.2S191.32,846.68,181,844.3S156.92,847.11,146.6,848.37S122.52,849.02,112.2,852.68Q105.32,855.12,77.8,872.74Z" fill="#6092c0" stroke="#6092c0"/><path d="M77.8,862.38Q105.32,839.16,112.2,836.01C122.52,831.29,136.28,835.1,146.6,830.87S170.68,805.8,181,807.82S205.08,836.72,215.4,844.3S239.48,858.51,249.8,858.4S273.88,844.51,284.2,843.56S308.28,851.01,318.6,852.01S342.68,851.68,353,850.27S377.08,844.75,387.4,842.65S411.48,836.01,421.8,836.26S445.88,844.18,456.2,844.3S480.28,839.66,490.6,837.09S514.68,826.17,525,827.14S549.08,844.2,559.4,843.56S583.48,821.09,593.8,822.83S617.88,852.06,628.2,855.17S652.28,844.88,662.6,843.56S686.68,846.5,697,846.38S721.08,846.63,731.4,842.73S755.48,819.57,765.8,820.34S789.88,844.8,800.2,847.87S824.28,842.99,834.6,840.82S858.68,832.82,869,833.44S893.08,845.34,903.4,844.97S927.48,829.72,937.8,830.95S961.88,853.03,972.2,853.18S996.28,833.37,1006.6,831.95S1030.68,841.02,1041,843.72S1065.08,851.71,1075.4,849.94S1099.48,832.51,1109.8,831.95S1133.88,846.48,1144.2,846.21S1168.28,827.91,1178.6,830.12S1202.68,859.86,1213,860.97S1237.08,841.77,1247.4,837.5S1271.48,828.98,1281.8,832.53S1305.88,858.46,1316.2,861.14S1340.28,854.96,1350.6,850.36S1374.68,833.57,1385,830.46S1409.08,827.82,1419.4,829.63S1443.48,843.9,1453.8,842.48S1477.88,822.48,1488.2,820.17S1512.28,827.9,1522.6,827.14S1546.68,816.41,1557,815.12S1581.08,814.95,1591.4,818.52S1615.48,837.89,1625.8,838.91S1649.88,823.47,1660.2,825.32Q1667.08,826.54,1694.6,851.19L1694.6,855.33Q1667.08,836.76,1660.2,836.26C1649.88,835.51,1636.12,850.9,1625.8,850.36S1601.72,836.97,1591.4,832.61S1567.32,820.17,1557,821.33S1532.92,838.96,1522.6,840.41S1498.52,829.29,1488.2,830.95S1464.12,850.6,1453.8,851.52S1429.72,839,1419.4,837.09S1395.32,835.64,1385,838.75S1360.92,853.71,1350.6,857.82S1326.52,868.97,1316.2,866.11S1292.12,841.86,1281.8,838.75S1257.72,841.65,1247.4,845.38S1223.32,865.29,1213,863.62S1188.92,835.51,1178.6,834.27S1154.52,854.78,1144.2,855.33S1120.12,837.84,1109.8,837.92S1085.72,853.96,1075.4,855.83S1051.32,853.04,1041,850.36S1016.92,836.75,1006.6,837.92S982.52,857.95,972.2,858.15S948.12,840.41,937.8,839.25S913.72,850.11,903.4,850.36S879.32,841.65,869,840.9S844.92,843.42,834.6,845.38S810.52,855.42,800.2,854S776.12,836.35,765.8,835.93S741.72,848.03,731.4,851.19S707.32,856.29,697,856.99S672.92,855.26,662.6,855.83S638.52,863.79,628.2,860.8S604.12,837.3,593.8,835.93S569.72,851.38,559.4,851.68S535.32,838.74,525,837.92S500.92,844.1,490.6,846.21S466.52,852.51,456.2,852.01S432.12,843.39,421.8,842.89S397.72,846.53,387.4,848.7S363.32,855.83,353,857.32S328.92,859.57,318.6,858.65S294.52,851.19,284.2,851.19S260.12,858.23,249.8,858.65S225.72,859.23,215.4,854S191.32,826.48,181,823.82S156.92,833.15,146.6,836.26S122.52,840.07,112.2,844.55Q105.32,847.54,77.8,866.11Z" fill="#d36086" stroke="#d36086"/><path d="M77.8,858.65Q105.32,830.79,112.2,827.47C122.52,822.5,136.28,830.83,146.6,825.48S170.68,790.45,181,791.82S205.08,824.65,215.4,834.6S239.48,857.95,249.8,858.15S273.88,837.84,284.2,835.93S308.28,844.29,318.6,845.38S342.68,844.54,353,843.23S377.08,838.63,387.4,836.59S411.48,829.63,421.8,829.63S445.88,836.84,456.2,836.59S480.28,831,490.6,827.97S514.68,815.24,525,816.36S549.08,836.43,559.4,835.43S583.48,807.61,593.8,809.73S617.88,846.29,628.2,849.53S652.28,833.35,662.6,831.29S686.68,835.32,697,835.76S721.08,838.92,731.4,834.27S755.48,803.63,765.8,804.75S789.88,837.01,800.2,841.73S824.28,838.62,834.6,836.26S858.68,825.48,869,825.98S893.08,840.07,903.4,839.58S927.48,821.37,937.8,822.66S961.88,847.7,972.2,848.2S996.28,827.65,1006.6,825.98S1030.68,834.38,1041,837.09S1065.08,845.72,1075.4,844.05S1099.48,827.02,1109.8,825.98S1133.88,837.09,1144.2,837.09S1168.28,822.79,1178.6,825.98S1202.68,857.77,1213,858.32S1237.08,834.43,1247.4,829.63S1271.48,822.33,1281.8,826.31S1305.88,853.67,1316.2,856.16S1340.28,847.99,1350.6,842.89S1374.68,825.27,1385,822.16S1409.08,820.47,1419.4,822.16S1443.48,835.36,1453.8,833.44S1477.88,812.33,1488.2,809.39S1512.28,813.95,1522.6,813.87S1546.68,810.32,1557,808.9S1581.08,801.63,1591.4,804.42S1615.48,825.98,1625.8,827.47S1649.88,811.43,1660.2,814.37Q1667.08,816.33,1694.6,847.04L1694.6,851.19Q1667.08,826.54,1660.2,825.32C1649.88,823.47,1636.12,839.93,1625.8,838.91S1601.72,822.09,1591.4,818.52S1567.32,813.82,1557,815.12S1532.92,826.38,1522.6,827.14S1498.52,817.87,1488.2,820.17S1464.12,841.06,1453.8,842.48S1429.72,831.43,1419.4,829.63S1395.32,827.35,1385,830.46S1360.92,845.75,1350.6,850.36S1326.52,863.81,1316.2,861.14S1292.12,836.07,1281.8,832.53S1257.72,833.24,1247.4,837.5S1223.32,862.08,1213,860.97S1188.92,832.34,1178.6,830.12S1154.52,845.94,1144.2,846.21S1120.12,831.39,1109.8,831.95S1085.72,848.18,1075.4,849.94S1051.32,846.42,1041,843.72S1016.92,830.53,1006.6,831.95S982.52,853.33,972.2,853.18S948.12,832.18,937.8,830.95S913.72,844.59,903.4,844.97S879.32,834.06,869,833.44S844.92,838.66,834.6,840.82S810.52,850.94,800.2,847.87S776.12,821.11,765.8,820.34S741.72,838.82,731.4,842.73S707.32,846.25,697,846.38S672.92,842.24,662.6,843.56S638.52,858.28,628.2,855.17S604.12,824.57,593.8,822.83S569.72,842.91,559.4,843.56S535.32,828.11,525,827.14S500.92,834.51,490.6,837.09S466.52,844.43,456.2,844.3S432.12,836.51,421.8,836.26S397.72,840.54,387.4,842.65S363.32,848.87,353,850.27S328.92,853.02,318.6,852.01S294.52,842.6,284.2,843.56S260.12,858.29,249.8,858.4S225.72,851.89,215.4,844.3S191.32,809.83,181,807.82S156.92,826.64,146.6,830.87S122.52,831.29,112.2,836.01Q105.32,839.16,77.8,862.38Z" fill="#d36086" stroke="#d36086"/><path d="M77.8,855.33Q105.32,824.36,112.2,820.26C122.52,814.1,136.28,819.57,146.6,814.29S170.68,783.15,181,785.02S205.08,816.84,215.4,826.72S239.48,850.53,249.8,850.94S273.88,831.41,284.2,829.46S308.28,837.04,318.6,837.92S342.68,836.48,353,835.35S377.08,832.48,387.4,830.37S411.48,821.36,421.8,821.33S445.88,830.02,456.2,830.21S480.28,825.8,490.6,822.58S514.68,807.3,525,808.73S549.08,833.06,559.4,832.11S583.48,800.81,593.8,802.43S617.88,839.04,628.2,842.89S652.28,830.68,662.6,828.13S686.68,825.95,697,825.9S721.08,831.94,731.4,827.8S755.48,796.92,765.8,798.28S789.88,831.95,800.2,836.92S824.28,834.71,834.6,831.45S858.68,815.39,869,815.2S893.08,831.55,903.4,830.21S927.48,804.75,937.8,806.24S961.88,838.54,972.2,840.16S996.28,818.81,1006.6,817.02S1030.68,825.41,1041,828.22S1065.08,837.19,1075.4,835.76S1099.48,819.98,1109.8,818.68S1133.88,827.14,1144.2,827.14S1168.28,815.9,1178.6,818.68S1202.68,844.76,1213,845.71S1237.08,829.34,1247.4,825.07S1271.48,813.71,1281.8,817.19S1305.88,845.8,1316.2,848.28S1340.28,839.12,1350.6,833.77S1374.68,815.55,1385,812.63S1409.08,812.47,1419.4,814.29S1443.48,826.59,1453.8,824.73S1477.88,804.74,1488.2,801.93S1512.28,806.13,1522.6,806S1546.68,802.97,1557,801.02S1581.08,790.22,1591.4,792.98S1615.48,817.38,1625.8,819.43S1649.88,802.89,1660.2,806.66Q1667.08,809.17,1694.6,844.55L1694.6,847.04Q1667.08,816.33,1660.2,814.37C1649.88,811.43,1636.12,828.96,1625.8,827.47S1601.72,807.21,1591.4,804.42S1567.32,807.48,1557,808.9S1532.92,813.8,1522.6,813.87S1498.52,806.46,1488.2,809.39S1464.12,831.53,1453.8,833.44S1429.72,823.86,1419.4,822.16S1395.32,819.05,1385,822.16S1360.92,837.79,1350.6,842.89S1326.52,858.65,1316.2,856.16S1292.12,830.29,1281.8,826.31S1257.72,824.83,1247.4,829.63S1223.32,858.86,1213,858.32S1188.92,829.16,1178.6,825.98S1154.52,837.09,1144.2,837.09S1120.12,824.93,1109.8,825.98S1085.72,842.39,1075.4,844.05S1051.32,839.8,1041,837.09S1016.92,824.31,1006.6,825.98S982.52,848.7,972.2,848.2S948.12,823.96,937.8,822.66S913.72,839.08,903.4,839.58S879.32,826.48,869,825.98S844.92,833.9,834.6,836.26S810.52,846.46,800.2,841.73S776.12,805.87,765.8,804.75S741.72,829.62,731.4,834.27S707.32,836.21,697,835.76S672.92,829.22,662.6,831.29S638.52,852.76,628.2,849.53S604.12,811.84,593.8,809.73S569.72,834.44,559.4,835.43S535.32,817.48,525,816.36S500.92,824.93,490.6,827.97S466.52,836.34,456.2,836.59S432.12,829.63,421.8,829.63S397.72,834.55,387.4,836.59S363.32,841.91,353,843.23S328.92,846.48,318.6,845.38S294.52,834.01,284.2,835.93S260.12,858.35,249.8,858.15S225.72,844.55,215.4,834.6S191.32,793.18,181,791.82S156.92,820.13,146.6,825.48S122.52,822.5,112.2,827.47Q105.32,830.79,77.8,858.65Z" fill="#9170b8" stroke="#9170b8"/><path d="M77.8,852.01Q105.32,817.94,112.2,813.04C122.52,805.7,136.28,808.32,146.6,803.09S170.68,775.85,181,778.22S205.08,809.02,215.4,818.85S239.48,843.1,249.8,843.72S273.88,824.98,284.2,822.99S308.28,829.78,318.6,830.46S342.68,828.42,353,827.47S377.08,826.32,387.4,824.15S411.48,813.09,421.8,813.04S445.88,823.2,456.2,823.82S480.28,820.6,490.6,817.19S514.68,799.36,525,801.1S549.08,829.69,559.4,828.8S583.48,794.01,593.8,795.13S617.88,831.78,628.2,836.26S652.28,828.02,662.6,824.98S686.68,816.58,697,816.03S721.08,824.97,731.4,821.33S755.48,790.2,765.8,791.82S789.88,826.89,800.2,832.11S824.28,830.8,834.6,826.64S858.68,805.29,869,804.42S893.08,823.03,903.4,820.84S927.48,788.13,937.8,789.83S961.88,829.38,972.2,832.11S996.28,809.98,1006.6,808.07S1030.68,816.43,1041,819.34S1065.08,828.67,1075.4,827.47S1099.48,812.93,1109.8,811.38S1133.88,817.19,1144.2,817.19S1168.28,809,1178.6,811.38S1202.68,831.74,1213,833.11S1237.08,824.26,1247.4,820.51S1271.48,805.08,1281.8,808.07S1305.88,837.92,1316.2,840.41S1340.28,830.25,1350.6,824.65S1374.68,805.83,1385,803.09S1409.08,804.47,1419.4,806.41S1443.48,817.82,1453.8,816.03S1477.88,797.16,1488.2,794.47S1512.28,798.32,1522.6,798.12S1546.68,795.63,1557,793.14S1581.08,778.8,1591.4,781.53S1615.48,808.77,1625.8,811.38S1649.88,794.34,1660.2,798.95Q1667.08,802.01,1694.6,842.06L1694.6,844.55Q1667.08,809.17,1660.2,806.66C1649.88,802.89,1636.12,821.48,1625.8,819.43S1601.72,795.74,1591.4,792.98S1567.32,799.07,1557,801.02S1532.92,805.86,1522.6,806S1498.52,799.12,1488.2,801.93S1464.12,822.88,1453.8,824.73S1429.72,816.1,1419.4,814.29S1395.32,809.71,1385,812.63S1360.92,828.42,1350.6,833.77S1326.52,850.77,1316.2,848.28S1292.12,820.67,1281.8,817.19S1257.72,820.79,1247.4,825.07S1223.32,846.67,1213,845.71S1188.92,821.47,1178.6,818.68S1154.52,827.14,1144.2,827.14S1120.12,817.39,1109.8,818.68S1085.72,834.33,1075.4,835.76S1051.32,831.03,1041,828.22S1016.92,815.23,1006.6,817.02S982.52,841.77,972.2,840.16S948.12,807.74,937.8,806.24S913.72,828.86,903.4,830.21S879.32,815.01,869,815.2S844.92,828.19,834.6,831.45S810.52,841.9,800.2,836.92S776.12,799.65,765.8,798.28S741.72,823.66,731.4,827.8S707.32,825.85,697,825.9S672.92,825.58,662.6,828.13S638.52,846.75,628.2,842.89S604.12,804.05,593.8,802.43S569.72,831.17,559.4,832.11S535.32,810.16,525,808.73S500.92,819.36,490.6,822.58S466.52,830.39,456.2,830.21S432.12,821.31,421.8,821.33S397.72,828.27,387.4,830.37S363.32,834.22,353,835.35S328.92,838.8,318.6,837.92S294.52,827.51,284.2,829.46S260.12,851.35,249.8,850.94S225.72,836.61,215.4,826.72S191.32,786.88,181,785.02S156.92,809,146.6,814.29S122.52,814.1,112.2,820.26Q105.32,824.36,77.8,855.33Z" fill="#9170b8" stroke="#9170b8"/><path d="M77.8,847.04Q105.32,807.99,112.2,802.68C122.52,794.72,136.28,798.33,146.6,793.97S170.68,770.24,181,773.66S205.08,807.14,215.4,816.77S239.48,838.67,249.8,837.92S273.88,813.29,284.2,811.8S308.28,826.76,318.6,827.97S342.68,821.06,353,819.84S377.08,821.88,387.4,819.84S411.48,806.8,421.8,806.24S445.88,815.84,456.2,816.11S480.28,812.04,490.6,808.07S514.68,788.54,525,789.66S549.08,816.51,559.4,815.53S583.48,781.06,593.8,783.11S617.88,823.86,628.2,829.21S652.28,821.56,662.6,818.76S686.68,811.72,697,810.56S721.08,815.34,731.4,810.97S755.48,779.9,765.8,781.45S789.88,815.14,800.2,821.33S824.28,827.04,834.6,822.74S858.68,793.91,869,792.73S893.08,817.42,903.4,814.87S927.48,774.76,937.8,775.73S961.88,817.77,972.2,821.33S996.28,800.92,1006.6,799.53S1030.68,808.5,1041,812.05S1065.08,823.92,1075.4,823.16S1099.48,808.51,1109.8,806.99S1133.88,813.67,1144.2,813.04S1168.28,800.41,1178.6,802.84S1202.68,827.52,1213,829.3S1237.08,819.56,1247.4,814.7S1271.48,794.01,1281.8,796.87S1305.88,830.54,1316.2,833.77S1340.28,823.84,1350.6,818.43S1374.68,801.77,1385,797.7S1409.08,789.81,1419.4,791.32S1443.48,807.77,1453.8,807.74S1477.88,794.13,1488.2,791.07S1512.28,789.12,1522.6,787.34S1546.68,781.89,1557,779.21S1581.08,765.72,1591.4,769.51S1615.48,801.6,1625.8,804.5S1649.88,783.76,1660.2,788.83Q1667.08,792.21,1694.6,838.33L1694.6,842.06Q1667.08,802.01,1660.2,798.95C1649.88,794.34,1636.12,814,1625.8,811.38S1601.72,784.27,1591.4,781.53S1567.32,790.66,1557,793.14S1532.92,797.92,1522.6,798.12S1498.52,791.78,1488.2,794.47S1464.12,814.24,1453.8,816.03S1429.72,808.35,1419.4,806.41S1395.32,800.36,1385,803.09S1360.92,819.05,1350.6,824.65S1326.52,842.89,1316.2,840.41S1292.12,811.05,1281.8,808.07S1257.72,816.75,1247.4,820.51S1223.32,834.48,1213,833.11S1188.92,813.77,1178.6,811.38S1154.52,817.19,1144.2,817.19S1120.12,809.84,1109.8,811.38S1085.72,826.28,1075.4,827.47S1051.32,822.26,1041,819.34S1016.92,806.15,1006.6,808.07S982.52,834.85,972.2,832.11S948.12,791.52,937.8,789.83S913.72,818.65,903.4,820.84S879.32,803.55,869,804.42S844.92,822.49,834.6,826.64S810.52,837.34,800.2,832.11S776.12,793.43,765.8,791.82S741.72,817.7,731.4,821.33S707.32,815.48,697,816.03S672.92,821.95,662.6,824.98S638.52,840.74,628.2,836.26S604.12,796.25,593.8,795.13S569.72,827.9,559.4,828.8S535.32,802.84,525,801.1S500.92,813.78,490.6,817.19S466.52,824.44,456.2,823.82S432.12,812.99,421.8,813.04S397.72,821.99,387.4,824.15S363.32,826.53,353,827.47S328.92,831.13,318.6,830.46S294.52,821,284.2,822.99S260.12,844.34,249.8,843.72S225.72,828.67,215.4,818.85S191.32,780.58,181,778.22S156.92,797.87,146.6,803.09S122.52,805.7,112.2,813.04Q105.32,817.94,77.8,852.01Z" fill="#ca8eae" stroke="#ca8eae"/><path d="M77.8,842.06Q105.32,798.03,112.2,792.31C122.52,783.73,136.28,788.33,146.6,784.85S170.68,764.62,181,769.1S205.08,805.25,215.4,814.7S239.48,834.23,249.8,832.11S273.88,801.6,284.2,800.61S308.28,823.74,318.6,825.48S342.68,813.71,353,812.21S377.08,817.45,387.4,815.53S411.48,800.51,421.8,799.44S445.88,808.47,456.2,808.4S480.28,803.47,490.6,798.95S514.68,777.72,525,778.22S549.08,803.33,559.4,802.26S583.48,768.1,593.8,771.09S617.88,815.95,628.2,822.16S652.28,815.11,662.6,812.55S686.68,806.87,697,805.08S721.08,805.7,731.4,800.61S755.48,769.59,765.8,771.09S789.88,803.39,800.2,810.56S824.28,823.28,834.6,818.85S858.68,782.53,869,781.04S893.08,811.81,903.4,808.9S927.48,761.38,937.8,761.63S961.88,806.15,972.2,810.56S996.28,791.86,1006.6,790.99S1030.68,800.57,1041,804.75S1065.08,819.17,1075.4,818.85S1099.48,804.09,1109.8,802.6S1133.88,810.14,1144.2,808.9S1168.28,791.82,1178.6,794.3S1202.68,823.29,1213,825.48S1237.08,814.87,1247.4,808.9S1271.48,782.94,1281.8,785.68S1305.88,823.16,1316.2,827.14S1340.28,817.44,1350.6,812.21S1374.68,797.71,1385,792.31S1409.08,775.16,1419.4,776.23S1443.48,797.73,1453.8,799.44S1477.88,791.1,1488.2,787.67S1512.28,779.92,1522.6,776.56S1546.68,768.14,1557,765.28S1581.08,752.64,1591.4,757.49S1615.48,794.44,1625.8,797.62S1649.88,773.17,1660.2,778.71Q1667.08,782.41,1694.6,834.6L1694.6,838.33Q1667.08,792.21,1660.2,788.83C1649.88,783.76,1636.12,807.4,1625.8,804.5S1601.72,773.3,1591.4,769.51S1567.32,776.54,1557,779.21S1532.92,785.56,1522.6,787.34S1498.52,788.01,1488.2,791.07S1464.12,807.7,1453.8,807.74S1429.72,792.82,1419.4,791.32S1395.32,793.64,1385,797.7S1360.92,813.02,1350.6,818.43S1326.52,837.01,1316.2,833.77S1292.12,799.73,1281.8,796.87S1257.72,809.84,1247.4,814.7S1223.32,831.07,1213,829.3S1188.92,805.28,1178.6,802.84S1154.52,812.42,1144.2,813.04S1120.12,805.47,1109.8,806.99S1085.72,822.4,1075.4,823.16S1051.32,815.59,1041,812.05S1016.92,798.13,1006.6,799.53S982.52,824.9,972.2,821.33S948.12,776.7,937.8,775.73S913.72,812.32,903.4,814.87S879.32,791.55,869,792.73S844.92,818.45,834.6,822.74S810.52,827.53,800.2,821.33S776.12,783.01,765.8,781.45S741.72,806.6,731.4,810.97S707.32,809.39,697,810.56S672.92,815.97,662.6,818.76S638.52,834.56,628.2,829.21S604.12,785.16,593.8,783.11S569.72,814.55,559.4,815.53S535.32,790.78,525,789.66S500.92,804.1,490.6,808.07S466.52,816.38,456.2,816.11S432.12,805.68,421.8,806.24S397.72,817.8,387.4,819.84S363.32,818.62,353,819.84S328.92,829.17,318.6,827.97S294.52,810.31,284.2,811.8S260.12,837.17,249.8,837.92S225.72,826.41,215.4,816.77S191.32,777.08,181,773.66S156.92,789.62,146.6,793.97S122.52,794.72,112.2,802.68Q105.32,807.99,77.8,847.04Z" fill="#ca8eae" stroke="#ca8eae"/></g><text x="33.8" y="833.2" transform="rotate(-90 33.8 833.2)" text-anchor="middle" font-family="Liberation Sans, sans-serif" font-size="13.6" font-weight="700" fill="#5f6671" textLength="38.6" lengthAdjust="spacingAndGlyphs">Count</text></svg>
<span class="t" style='left:60.07px;top:901.00px;font-size:12px;color:#69707d;font-weight:400;font-family:"Liberation Sans", sans-serif;transform:scaleX(1.0678);transform-origin:0 50%;'>0</span>
<span class="t" style='left:53.80px;top:860.00px;font-size:12px;color:#69707d;font-weight:400;font-family:"Liberation Sans", sans-serif;transform:scaleX(1.0021);transform-origin:0 50%;'>50</span>
<span class="t" style='left:46.99px;top:819.00px;font-size:12px;color:#69707d;font-weight:400;font-family:"Liberation Sans", sans-serif;transform:scaleX(1.0081);transform-origin:0 50%;'>100</span>
<span class="t" style='left:46.99px;top:779.00px;font-size:12px;color:#69707d;font-weight:400;font-family:"Liberation Sans", sans-serif;transform:scaleX(1.0081);transform-origin:0 50%;'>150</span>
<span class="t" style='left:165.29px;top:916.00px;font-size:12px;color:#69707d;font-weight:400;font-family:"Liberation Sans", sans-serif;transform:scaleX(1.0085);transform-origin:0 50%;'>18:00</span>
<span class="t" style='left:372.03px;top:916.00px;font-size:12px;color:#69707d;font-weight:400;font-family:"Liberation Sans", sans-serif;transform:scaleX(0.9981);transform-origin:0 50%;'>21:00</span>
<span class="t" style='left:578.66px;top:916.00px;font-size:12px;color:#69707d;font-weight:400;font-family:"Liberation Sans", sans-serif;transform:scaleX(0.9913);transform-origin:0 50%;'>00:00</span>
<span class="t" style='left:785.09px;top:916.00px;font-size:12px;color:#69707d;font-weight:400;font-family:"Liberation Sans", sans-serif;transform:scaleX(0.9913);transform-origin:0 50%;'>03:00</span>
<span class="t" style='left:991.52px;top:916.00px;font-size:12px;color:#69707d;font-weight:400;font-family:"Liberation Sans", sans-serif;transform:scaleX(0.9913);transform-origin:0 50%;'>06:00</span>
<span class="t" style='left:1197.95px;top:916.00px;font-size:12px;color:#69707d;font-weight:400;font-family:"Liberation Sans", sans-serif;transform:scaleX(0.9913);transform-origin:0 50%;'>09:00</span>
<span class="t" style='left:1403.87px;top:916.00px;font-size:12px;color:#69707d;font-weight:400;font-family:"Liberation Sans", sans-serif;transform:scaleX(1.0085);transform-origin:0 50%;'>12:00</span>
<span class="t" style='left:1610.30px;top:916.00px;font-size:12px;color:#69707d;font-weight:400;font-family:"Liberation Sans", sans-serif;transform:scaleX(1.0085);transform-origin:0 50%;'>15:00</span>
<span class="t" style='left:824.90px;top:935.00px;font-size:13.6px;color:#5f6671;font-weight:700;font-family:"Liberation Sans", sans-serif;transform:scaleX(1.0405);transform-origin:0 50%;'>timestamp per 30 minutes</span>
<svg style="left:1754.5px;top:755px" width="16" height="122" viewBox="1754.5 755 16 122"><circle cx="1762" cy="763.5" r="6.5" fill="#54b399"/><circle cx="1762" cy="789.7" r="6.5" fill="#6092c0"/><circle cx="1762" cy="815.9" r="6.5" fill="#d36086"/><circle cx="1762" cy="842.2" r="6.5" fill="#9170b8"/><circle cx="1762" cy="868.5" r="6.5" fill="#ca8eae"/></svg><ul class="legend"><li><span class="t" style='left:1774.91px;top:756.00px;font-size:13.5px;color:#343741;font-weight:400;font-family:"Liberation Sans", sans-serif;transform:scaleX(0.9890);transform-origin:0 50%;'>11.4: Count</span></li><li><span class="t" style='left:1774.89px;top:783.00px;font-size:13.5px;color:#343741;font-weight:400;font-family:"Liberation Sans", sans-serif;transform:scaleX(1.0124);transform-origin:0 50%;'>10.2.4: Count</span></li><li><span class="t" style='left:1774.89px;top:809.00px;font-size:13.5px;color:#343741;font-weight:400;font-family:"Liberation Sans", sans-serif;transform:scaleX(1.0061);transform-origin:0 50%;'>10.2.5: Count</span></li><li><span class="t" style='left:1775.29px;top:836.00px;font-size:13.5px;color:#343741;font-weight:400;font-family:"Liberation Sans", sans-serif;transform:scaleX(1.0220);transform-origin:0 50%;'>2.2: Count</span></li><li><span class="t" style='left:1774.92px;top:862.00px;font-size:13.5px;color:#343741;font-weight:400;font-family:"Liberation Sans", sans-serif;transform:scaleX(0.9816);transform-origin:0 50%;'>11.5: Count</span></li></ul>
</section>
</main>
</div>
</body>
</html>
